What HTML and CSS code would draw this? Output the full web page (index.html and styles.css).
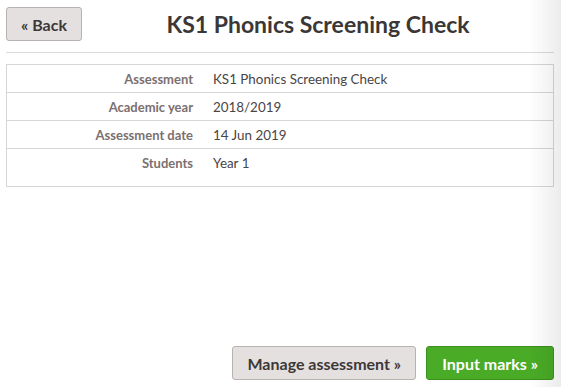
FILE: index.html
```
<!DOCTYPE html>
<html>
<head>
<meta charset="utf-8">
<link rel="stylesheet" href="styles.css">
</head>
<body>
<div class="page">
  <header class="header">
    <button class="btn btn-grey">« Back</button>
    <h1 class="title">KS1 Phonics Screening Check</h1>
  </header>
  <hr class="rule">
  <div class="details">
    <table class="info">
      <tr><th>Assessment</th><td>KS1 Phonics Screening Check</td></tr>
      <tr><th>Academic year</th><td>2018/2019</td></tr>
      <tr><th>Assessment date</th><td>14 Jun 2019</td></tr>
      <tr class="last"><th>Students</th><td>Year 1</td></tr>
    </table>
  </div>
  <div class="spacer"></div>
  <footer class="actions">
    <button class="btn btn-grey">Manage assessment »</button>
    <button class="btn btn-green">Input marks »</button>
  </footer>
</div>
<div class="edge-shadow"></div>
</body>
</html>
```
FILE: styles.css
```
html, body {
  margin: 0;
  padding: 0;
  height: 100%;
  background: #fff;
  font-family: Lato, "Open Sans", sans-serif;
  color: #4a4545;
}
.page {
  box-sizing: border-box;
  height: 100vh;
  padding: 7px 7px 7px 6px;
  display: flex;
  flex-direction: column;
}
.header {
  display: flex;
  align-items: center;
  height: 34px;
}
.btn {
  box-sizing: border-box;
  height: 34px;
  border-radius: 3px;
  font-family: Lato, "Open Sans", sans-serif;
  font-weight: 700;
  font-size: 16px;
  padding: 0 14px;
  cursor: pointer;
}
.btn-grey {
  background: #e4e0df;
  border: 1px solid #b8b2b1;
  color: #3d3838;
}
.btn-green {
  background: #4aab27;
  border: 1px solid #3b901d;
  color: #fff;
  padding: 0 15px;
}
.title {
  flex: 1;
  margin: 0;
  text-align: center;
  font-size: 23px;
  font-weight: 700;
  color: #3b3737;
}
.rule {
  margin: 11px 0 0 0;
  border: 0;
  border-top: 1px solid #dedada;
  height: 0;
}
.details {
  margin-top: 11px;
  border: 1px solid #d9d5d5;
  padding-bottom: 10px;
}
.info {
  width: 100%;
  border-collapse: collapse;
  font-size: 13px;
}
.info th, .info td {
  height: 27px;
  padding: 0;
  border-bottom: 1px solid #d9d5d5;
  vertical-align: middle;
}
.info tr.last th, .info tr.last td {
  border-bottom: 0;
}
.info th {
  width: 186px;
  padding-right: 7px;
  text-align: right;
  font-weight: 700;
  color: #7b7070;
}
.info td {
  padding-left: 13px;
  font-size: 13.4px;
  color: #4a4545;
}
.spacer {
  flex: 1;
}
.actions {
  display: flex;
  justify-content: flex-end;
  gap: 10px;
}
.edge-shadow {
  position: fixed;
  top: 0;
  right: 0;
  width: 32px;
  height: 100%;
  background: linear-gradient(to right, rgba(0,0,0,0), rgba(0,0,0,0.075));
  pointer-events: none;
}
```
